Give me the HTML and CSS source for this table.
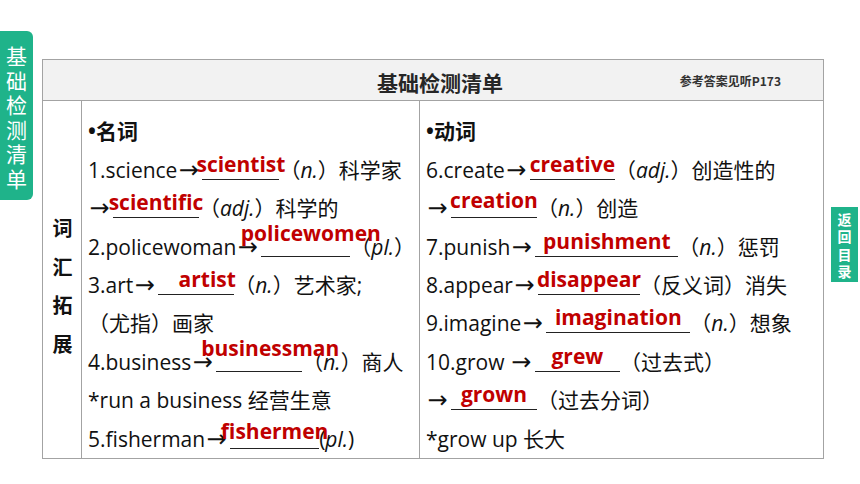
FILE: index.html
```html
<!DOCTYPE html>
<html lang="zh-CN">
<head>
<meta charset="UTF-8">
<title>基础检测清单</title>
<link rel="stylesheet" href="styles.css">
</head>
<body>
<div class="slide">
  <div class="side-tab">基础检测清单</div>

  <div class="sheet">
    <div class="sheet-head">
      <h1>基础检测清单</h1>
      <span class="ref">参考答案见听P173</span>
    </div>

    <div class="sheet-body">
      <div class="topic">词汇拓展</div>

      <div class="col">
        <p class="cat">•名词</p>
        <p>1.science<span class="arr">→</span><span class="blank w77"><b class="ans">scientist</b></span>（<i>n.</i>）科学家</p>
        <p><span class="arr">→</span><span class="blank w86"><b class="ans">scientific</b></span>（<i>adj.</i>）科学的</p>
        <p>2.policewoman<span class="arr">→</span><span class="blank w89"><b class="ans high nudge-s">policewomen</b></span>（<i>pl.</i>）</p>
        <p>3.art<span class="arr">→</span><span class="blank w76"><b class="ans nudge">artist</b></span>（<i>n.</i>）艺术家;</p>
        <p>（尤指）画家</p>
        <p>4.business<span class="arr">→</span><span class="blank w86"><b class="ans high nudge">businessman</b></span>（<i>n.</i>）商人</p>
        <p>*run a business 经营生意</p>
        <p>5.fisherman<span class="arr">→</span><span class="blank w89"><b class="ans mid">fishermen</b></span>(<i>pl.</i>)</p>
      </div>

      <div class="col">
        <p class="cat">•动词</p>
        <p>6.create<span class="arr">→</span><span class="blank w85"><b class="ans">creative</b></span>（<i>adj.</i>）创造性的</p>
        <p><span class="arr">→</span><span class="blank w86"><b class="ans mid">creation</b></span>（<i>n.</i>）创造</p>
        <p>7.punish<span class="arr">→</span><span class="blank w143"><b class="ans">punishment</b></span>（<i>n.</i>）惩罚</p>
        <p>8.appear<span class="arr">→</span><span class="blank w102"><b class="ans">disappear</b></span>（反义词）消失</p>
        <p>9.imagine<span class="arr">→</span><span class="blank w144"><b class="ans">imagination</b></span>（<i>n.</i>）想象</p>
        <p>10.grow <span class="arr">→</span><span class="blank w85"><b class="ans">grew</b></span>（过去式）</p>
        <p><span class="arr">→</span><span class="blank w86"><b class="ans">grown</b></span>（过去分词）</p>
        <p>*grow up 长大</p>
      </div>
    </div>
  </div>

  <div class="back-tab">返回目录</div>
</div>
</body>
</html>
```

FILE: styles.css
```css
body {
  margin: 0;
  background: #fff;
  font-family: "Open Sans", "Noto Sans CJK SC", sans-serif;
  color: #111;
}

.slide {
  display: flex;
  align-items: flex-start;
  width: 860px;
  height: 484px;
  overflow: hidden;
}

/* green tabs */
.side-tab {
  width: 33px;
  height: 169px;
  margin-top: 31px;
  padding-top: 12px;
  box-sizing: border-box;
  background-color: #1fb38a;
  color: #fff;
  font-family: "Noto Sans CJK SC", sans-serif;
  font-size: 21px;
  line-height: 24.6px;
  text-align: center;
  border-radius: 0 6px 6px 0;
}

.back-tab {
  width: 27px;
  height: 75px;
  margin-top: 207px;
  margin-left: 7px;
  padding-top: 4px;
  box-sizing: border-box;
  background-color: #1fb38a;
  color: #fff;
  font-family: "Noto Sans CJK SC", sans-serif;
  font-weight: bold;
  font-size: 14px;
  line-height: 17.3px;
  text-align: center;
}

/* table */
.sheet {
  width: 782px;
  height: 400px;
  margin-top: 59px;
  margin-left: 9px;
  box-sizing: border-box;
  border: 1px solid #a3a3a3;
  display: flex;
  flex-direction: column;
}

.sheet-head {
  height: 44px;
  border-bottom: 1px solid #a3a3a3;
  background-color: #f2f2f2;
  display: flex;
  align-items: center;
  padding-right: 42px;
}

.sheet-head h1 {
  margin: 4px 0 0 334px;
  font-family: "Noto Sans CJK SC", sans-serif;
  font-size: 21px;
  font-weight: bold;
  color: #262626;
}

.ref {
  margin-left: auto;
  margin-top: 1px;
  font-family: "Noto Sans CJK SC", sans-serif;
  font-size: 12px;
  font-weight: bold;
  color: #333;
}

.sheet-body {
  flex: 1;
  display: grid;
  grid-template-columns: 39px 337px 1fr;
}

.topic {
  border-right: 1px solid #a3a3a3;
  padding-top: 108px;
  padding-left: 1px;
  font-family: "Noto Sans CJK SC", sans-serif;
  font-weight: bold;
  font-size: 20px;
  line-height: 38.5px;
  text-align: center;
}

.col {
  padding: 11px 0 0 6px;
  font-size: 21px;
  line-height: 38.4px;
  white-space: nowrap;
  overflow: hidden;
}

.col + .col {
  border-left: 1px solid #a3a3a3;
}

.col p {
  margin: 0;
}

.col .cat {
  font-weight: bold;
}

.col i {
  font-style: italic;
}

.arr {
  display: inline-block;
  width: 23px;
  font-family: "DejaVu Sans", sans-serif;
  font-size: 24px;
  line-height: 1;
  text-align: center;
}

/* answer blanks */
.blank {
  display: inline-block;
  position: relative;
  height: 20px;
  margin-left: 2px;
  margin-bottom: -2px;
  border-bottom: 1px solid #222;
}

.w76 { width: 76px; }
.w77 { width: 77px; }
.w85 { width: 85px; }
.w86 { width: 86px; }
.w89 { width: 89px; }
.w102 { width: 102px; }
.w143 { width: 143px; }
.w144 { width: 144px; }

.ans {
  position: absolute;
  left: 50%;
  bottom: 4px;
  transform: translateX(-50%);
  color: #c00000;
  font-weight: bold;
  line-height: 1;
}

.ans.mid { bottom: 6px; }
.ans.high { bottom: 12px; }
.ans.nudge { margin-left: 11px; }
.ans.nudge-s { margin-left: 5px; }
```
